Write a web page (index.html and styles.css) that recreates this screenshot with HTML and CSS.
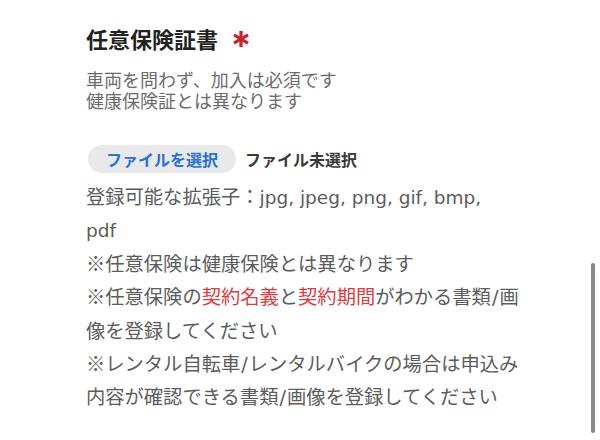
FILE: index.html
```html
<!DOCTYPE html>
<html lang="ja">
<head>
<meta charset="utf-8">
<link rel="stylesheet" href="styles.css">
</head>
<body>
<div class="page">
  <h2 class="title">任意保険証書<svg class="req" viewBox="0 0 20 20" width="18" height="18"><g stroke="#c3262c" stroke-width="3.6" stroke-linecap="butt"><line x1="10" y1="1" x2="10" y2="19"/><line x1="2.2" y1="5.5" x2="17.8" y2="14.5"/><line x1="2.2" y1="14.5" x2="17.8" y2="5.5"/></g></svg></h2>
  <p class="sub">車両を問わず、加入は必須です<br>健康保険証とは異なります</p>
  <div class="file-row">
    <span class="file-btn">ファイルを選択</span>
    <span class="file-none">ファイル未選択</span>
  </div>
  <p class="notes">登録可能な拡張子：<span class="lat">jpg, jpeg, png, gif, bmp,</span><br><span class="lat">pdf</span><br>※任意保険は健康保険とは異なります<br>※任意保険の<span class="hl">契約名義</span>と<span class="hl">契約期間</span>がわかる書類<span class="sl">/</span>画<br>像を登録してください<br>※レンタル自転車<span class="sl">/</span>レンタルバイクの場合は申込み<br>内容が確認できる書類<span class="sl">/</span>画像を登録してください</p>
</div>
<div class="scrollbar"></div>
</body>
</html>
```
FILE: styles.css
```css
html, body {
  margin: 0;
  background: #ffffff;
}
body {
  font-family: "Noto Sans CJK JP", "Noto Sans", sans-serif;
  width: 600px;
  height: 440px;
  overflow: hidden;
  position: relative;
}
.page {
  padding: 24px 0 0 86px;
}
.title {
  margin: 0;
  font-size: 22px;
  line-height: 28px;
  font-weight: 700;
  color: #222222;
  display: flex;
  align-items: center;
}
.req {
  margin-left: 14px;
  margin-top: 1px;
}
.sub {
  margin: 17px 0 0;
  font-size: 18px;
  line-height: 21px;
  color: #6b6b6b;
}
.file-row {
  margin-top: 34px;
  display: flex;
  align-items: center;
  gap: 9px;
}
.file-btn {
  margin-left: 2px;
  height: 28px;
  padding: 0 18px;
  border-radius: 14px;
  background: #e9e9ec;
  color: #2a70d6;
  font-size: 16px;
  font-weight: 700;
  line-height: 28px;
}
.file-none {
  font-size: 16px;
  font-weight: 700;
  color: #3a3a3a;
}
.notes {
  margin: 7px 0 0;
  font-size: 19.3px;
  line-height: 33.4px;
  color: #5c5c5c;
}
.lat {
  font-family: "DejaVu Sans", "Noto Sans", sans-serif;
  font-size: 18.5px;
  line-height: 1;
}
.sl {
  font-family: "DejaVu Sans", sans-serif;
  padding: 0 1px;
  line-height: 1;
}
.hl {
  color: #e03a3e;
}
.scrollbar {
  position: absolute;
  left: 591px;
  top: 263px;
  width: 4px;
  height: 170px;
  border-radius: 2px;
  background: #8a8a8a;
}
```
